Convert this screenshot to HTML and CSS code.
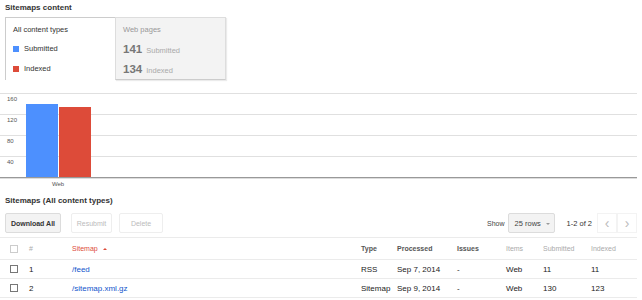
FILE: index.html
```html
<!DOCTYPE html>
<html lang="en">
<head>
    <meta charset="UTF-8">
    <title>Sitemaps</title>
    <link rel="stylesheet" href="styles.css">
</head>
<body>

    <h2 class="section-title">Sitemaps content</h2>

    <div class="tabs">
        <div class="tab tab-active">
            <div class="tab-head">All content types</div>
            <div class="legend"><span class="swatch swatch-blue"></span>Submitted</div>
            <div class="legend"><span class="swatch swatch-red"></span>Indexed</div>
        </div>
        <div class="tab tab-idle">
            <div class="tab-head">Web pages</div>
            <div class="stat"><b>141</b> Submitted</div>
            <div class="stat"><b>134</b> Indexed</div>
        </div>
    </div>

    <svg class="chart" width="642" height="100" viewBox="0 0 642 100">
        <g stroke="#e0e0e0" stroke-width="1">
            <line x1="0" y1="3.5" x2="637" y2="3.5"/>
            <line x1="0" y1="24.5" x2="637" y2="24.5"/>
            <line x1="0" y1="45.5" x2="637" y2="45.5"/>
            <line x1="0" y1="66.5" x2="637" y2="66.5"/>
        </g>
        <g class="axis-label" fill="#555">
            <text x="7" y="11">160</text>
            <text x="7" y="32">120</text>
            <text x="7" y="53">80</text>
            <text x="7" y="74">40</text>
        </g>
        <rect x="26" y="14" width="32" height="73" fill="#4d90fe"/>
        <rect x="59" y="17" width="32" height="70" fill="#dd4b39"/>
        <line x1="0" y1="87.5" x2="637" y2="87.5" stroke="#999" stroke-width="1"/>
        <line x1="0" y1="88.5" x2="637" y2="88.5" stroke="#ddd" stroke-width="1"/>
        <text class="axis-label" x="58" y="96" fill="#555" text-anchor="middle">Web</text>
    </svg>

    <h2 class="section-title title-lower">Sitemaps (All content types)</h2>

    <div class="toolbar">
        <div class="actions">
            <button class="btn btn-download">Download All</button>
            <button class="btn btn-disabled btn-resubmit">Resubmit</button>
            <button class="btn btn-disabled btn-delete">Delete</button>
        </div>
        <div class="pager">
            <span class="show">Show</span>
            <button class="btn btn-select">25 rows <span class="caret"></span></button>
            <span class="count">1-2 of 2</span>
            <button class="btn-nav">&lsaquo;</button>
            <button class="btn-nav">&rsaquo;</button>
        </div>
    </div>

    <table class="sitemaps">
        <colgroup>
            <col style="width: 24px">
            <col style="width: 43px">
            <col style="width: 289px">
            <col style="width: 36px">
            <col style="width: 60px">
            <col style="width: 49px">
            <col style="width: 37px">
            <col style="width: 48px">
            <col style="width: 51px">
        </colgroup>
        <thead>
            <tr>
                <th><span class="check check-light"></span></th>
                <th class="muted">#</th>
                <th class="sorted">Sitemap <span class="sort-up"></span></th>
                <th>Type</th>
                <th>Processed</th>
                <th>Issues</th>
                <th class="muted">Items</th>
                <th class="muted">Submitted</th>
                <th class="muted">Indexed</th>
            </tr>
        </thead>
        <tbody>
            <tr>
                <td><span class="check"></span></td>
                <td>1</td>
                <td><a href="#">/feed</a></td>
                <td>RSS</td>
                <td>Sep 7, 2014</td>
                <td>-</td>
                <td>Web</td>
                <td>11</td>
                <td>11</td>
            </tr>
            <tr>
                <td><span class="check"></span></td>
                <td>2</td>
                <td><a href="#">/sitemap.xml.gz</a></td>
                <td>Sitemap</td>
                <td>Sep 9, 2014</td>
                <td>-</td>
                <td>Web</td>
                <td>130</td>
                <td>123</td>
            </tr>
        </tbody>
    </table>

</body>
</html>
```

FILE: styles.css
```css
body {
    margin: 0;
    font-family: "Liberation Sans", Arial, sans-serif;
    color: #222;
    background: #fff;
    width: 642px;
}
.section-title {
    margin: 0;
    padding: 3px 0 0 5px;
    height: 14px;
    font-size: 8px;
    font-weight: bold;
    color: #333;
    line-height: 10px;
}
.title-lower {
    padding-top: 2px;
    height: 18px;
    line-height: 18px;
}
.tabs {
    display: flex;
    margin-left: 5px;
    height: 63px;
}
.tab {
    box-sizing: border-box;
    height: 63px;
    padding: 6px 0 0 7px;
    font-size: 7.5px;
}
.tab-active {
    width: 110px;
    background: #fff;
    border-left: 1px solid #ccc;
    border-top: 1px solid #ccc;
}
.tab-idle {
    width: 111px;
    background: #f3f3f3;
    border: 1px solid #ddd;
    border-bottom-color: #ccc;
    color: #aaa;
    box-shadow: 1px 1px 1px rgba(0, 0, 0, 0.08);
}
.tab-head {
    height: 12px;
    line-height: 12px;
    margin-bottom: 3px;
    color: #333;
}
.tab-idle .tab-head {
    color: #999;
}
.legend {
    height: 20px;
    line-height: 20px;
    display: flex;
    align-items: center;
    color: #333;
}
.swatch {
    width: 6px;
    height: 6px;
    margin-right: 5px;
}
.swatch-blue {
    background: #4d90fe;
}
.swatch-red {
    background: #dd4b39;
}
.stat {
    height: 20px;
    line-height: 20px;
    color: #aaa;
    font-size: 7.5px;
}
.stat b {
    font-size: 11.5px;
    color: #777;
    margin-right: 2px;
}
.chart {
    display: block;
    margin-top: 10px;
}
.axis-label {
    font-family: "Liberation Sans", Arial, sans-serif;
    font-size: 6px;
}
.toolbar {
    display: flex;
    justify-content: space-between;
    align-items: center;
    padding: 3px 0 4px 5px;
    border-bottom: 1px solid #ebebeb;
    width: 632px;
    height: 20px;
}
.actions {
    display: flex;
}
.btn {
    box-sizing: border-box;
    height: 20px;
    padding: 0;
    font-family: inherit;
    font-size: 7px;
    font-weight: bold;
    color: #333;
    background: #f3f3f3;
    border: 1px solid #dcdcdc;
    border-radius: 2px;
    text-align: center;
}
.btn-download {
    width: 56px;
    margin-right: 10px;
}
.btn-disabled {
    background: #fff;
    border-color: #eee;
    color: #bbb;
    font-weight: normal;
}
.btn-resubmit {
    width: 41px;
    margin-right: 7px;
}
.btn-delete {
    width: 44px;
}
.pager {
    display: flex;
    align-items: center;
    font-size: 7px;
}
.show {
    color: #444;
    margin-right: 3px;
}
.btn-select {
    width: 47px;
    font-size: 7.5px;
    font-weight: normal;
    color: #444;
    padding: 0 0 0 6px;
    text-align: left;
    margin-right: 12px;
}
.caret {
    display: inline-block;
    margin-left: 3px;
    vertical-align: middle;
    border-left: 2px solid transparent;
    border-right: 2px solid transparent;
    border-top: 2.5px solid #999;
}
.count {
    font-size: 7.5px;
    color: #333;
    margin-right: 5px;
}
.btn-nav {
    width: 20px;
    height: 20px;
    padding: 0;
    border: 1px solid #f3f3f3;
    background: #fff;
    color: #bbb;
    font-size: 14px;
    line-height: 14px;
    font-family: inherit;
}
.sitemaps {
    table-layout: fixed;
    border-collapse: collapse;
    width: 637px;
    font-size: 8px;
}
.sitemaps th, .sitemaps td {
    text-align: left;
    padding: 0 0 0 5px;
    white-space: nowrap;
    overflow: hidden;
    border-bottom: 1px solid #ebebeb;
}
.sitemaps th:first-child, .sitemaps td:first-child {
    padding-left: 10px;
}
.sitemaps th {
    height: 21px;
    font-size: 7px;
    font-weight: bold;
    color: #555;
}
.sitemaps td {
    height: 18px;
    color: #222;
}
.sitemaps th.muted {
    color: #aaa;
    font-weight: normal;
}
.sitemaps th.sorted {
    color: #dd4b39;
    font-weight: normal;
}
.sort-up {
    display: inline-block;
    margin-left: 3px;
    vertical-align: middle;
    border-left: 2px solid transparent;
    border-right: 2px solid transparent;
    border-bottom: 2.5px solid #dd4b39;
}
.check {
    display: block;
    box-sizing: border-box;
    width: 8px;
    height: 8px;
    border: 1px solid #777;
}
.check-light {
    border-color: #ccc;
}
.sitemaps a {
    color: #15c;
    text-decoration: none;
}
```
